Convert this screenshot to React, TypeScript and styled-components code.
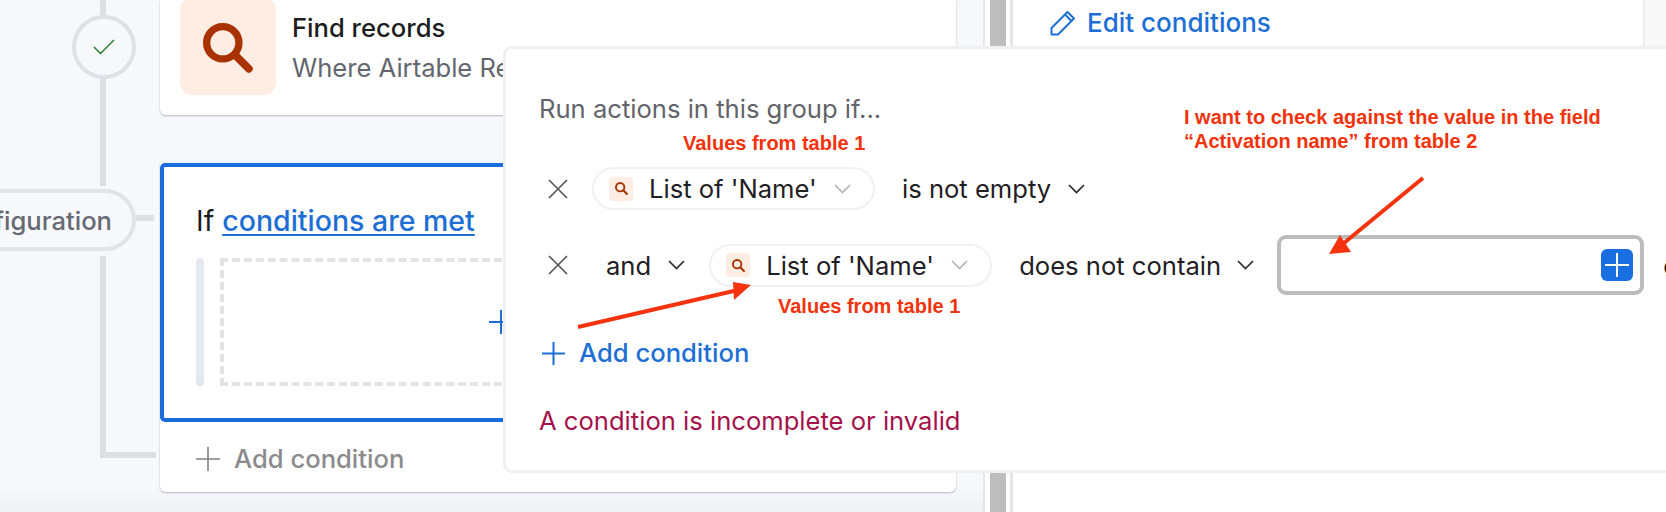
import React from "react";
import styled, { createGlobalStyle } from "styled-components";

const Global = createGlobalStyle`
  html, body { margin: 0; padding: 0; background: #fff; }
  body { font-family: Inter, "Liberation Sans", sans-serif; }
  #root { width: 1666px; height: 512px; overflow: hidden; }
`;

const Page = styled.div`
  position: relative;
  display: flex;
  width: 1666px;
  height: 512px;
  overflow: hidden;
`;

const Canvas = styled.div`
  position: relative;
  flex: 0 0 983px;
  box-sizing: border-box;
  padding-left: 160px;
  background: linear-gradient(#f6f8fc 0, #f6f8fc 490px, #f1f2f6 505px, #f1f2f6 512px);
  overflow: hidden;
`;

const Splitter = styled.div`
  flex: 0 0 30px;
  box-sizing: border-box;
  width: 30px;
  display: flex;
  background: #fff;
`;
const SplitEdge = styled.div<{ $w: number }>`
  flex: 0 0 ${(p) => p.$w}px;
  background: #e6e6e9;
`;
const SplitGap = styled.div<{ $w: number }>`
  flex: 0 0 ${(p) => p.$w}px;
  background: #fff;
`;
const SplitBar = styled.div`
  flex: 0 0 16px;
  background: #bdbdbd;
`;

const Side = styled.div`
  flex: 1;
  background: #fff;
`;
const SideHeader = styled.div`
  display: flex;
  height: 49px;
  box-sizing: border-box;
  border-bottom: 3px solid #f0f0f0;
`;
const SideHeaderMain = styled.div`
  flex: 0 0 632px;
  box-sizing: border-box;
  display: flex;
  align-items: center;
  gap: 11px;
  padding: 0 0 1px 37px;
  border-right: 2px solid #ececec;
  color: #1d6fd6;
  font-size: 26px;
  font-weight: 500;
`;
const SideHeaderRest = styled.div`
  flex: 1;
  background: #f8f8f8;
`;

const Card = styled.div`
  width: 796px;
  box-sizing: border-box;
  background: #fff;
  border-radius: 0 0 6px 6px;
  box-shadow: 0 1px 2px rgba(60, 60, 70, 0.35);
`;
const FindCard = styled(Card)`
  display: flex;
  gap: 17px;
  height: 115px;
  padding-left: 20px;
`;
const IconTile = styled.div`
  flex: 0 0 96px;
  height: 95px;
  display: flex;
  align-items: center;
  justify-content: center;
  background: #ffece3;
  border-radius: 8px 8px 12px 12px;
`;
const FindText = styled.div`
  display: flex;
  flex-direction: column;
  padding-top: 12px;
  min-width: 0;
`;
const FindTitle = styled.div`
  font-size: 25.6px;
  line-height: 32px;
  font-weight: 500;
  color: #1c1d20;
  margin-left: -1px;
`;
const FindSub = styled.div`
  margin-top: 8px;
  margin-left: -1px;
  font-size: 25.6px;
  line-height: 32px;
  color: #63666f;
  white-space: nowrap;
`;

const GroupCard = styled(Card)`
  margin-top: 48px;
  height: 329px;
`;
const GroupFrame = styled.div`
  box-sizing: border-box;
  height: 259px;
  border: 4px solid #1b6ddb;
  border-radius: 5px;
  padding: 38px 33px 0 32px;
  background: #fff;
`;
const GroupTitle = styled.div`
  font-size: 28.5px;
  line-height: 32px;
  color: #1c1d20;
`;
const GroupLink = styled.span`
  color: #1d6fd6;
  font-weight: 500;
  text-decoration: underline;
  text-decoration-thickness: 2px;
  text-underline-offset: 3px;
`;
const GroupBody = styled.div`
  display: flex;
  gap: 16px;
  margin-top: 21px;
`;
const GroupBar = styled.div`
  flex: 0 0 8px;
  height: 128px;
  border-radius: 4px;
  background: #e4e8f2;
`;
const DropZone = styled.div`
  flex: 1;
  height: 128px;
  box-sizing: border-box;
  border: 4px dashed #e4e4e4;
  display: flex;
  align-items: center;
  justify-content: center;
  padding-right: 138px;
`;
const AddRow = styled.div<{ $muted?: boolean; $left?: number }>`
  display: flex;
  align-items: center;
  gap: 14px;
  font-size: 25.6px;
  line-height: 30px;
  font-weight: 500;
  color: ${(p) => (p.$muted ? "#8b8b8d" : "#1d6fd6")};
  margin-left: ${(p) => p.$left ?? 0}px;
`;
const GroupFooter = styled.div`
  padding: 22px 0 0 36px;
`;

const RailLine = styled.div<{ $x: number; $y: number; $w: number; $h: number }>`
  position: absolute;
  left: ${(p) => p.$x}px;
  top: ${(p) => p.$y}px;
  width: ${(p) => p.$w}px;
  height: ${(p) => p.$h}px;
  background: #dedfe4;
`;
const StepCircle = styled.div`
  position: absolute;
  left: 72px;
  top: 15px;
  width: 64px;
  height: 64px;
  box-sizing: border-box;
  border: 4px solid #e0e1e6;
  border-radius: 50%;
  background: #f6f8fc;
  display: flex;
  align-items: center;
  justify-content: center;
`;
const StepPill = styled.div`
  position: absolute;
  left: -100px;
  top: 189px;
  width: 236px;
  height: 62px;
  box-sizing: border-box;
  border: 4px solid #e2e3e8;
  border-radius: 31px;
  background: #f6f8fc;
  display: flex;
  align-items: center;
  justify-content: flex-end;
  padding-right: 20px;
  font-size: 25.6px;
  font-weight: 500;
  color: #676a72;
  white-space: nowrap;
`;

const Popover = styled.div`
  position: absolute;
  left: 503px;
  top: 46px;
  width: 1240px;
  height: 427px;
  box-sizing: border-box;
  background: #fff;
  border: 3px solid #f0f0f0;
  border-radius: 9px;
  padding: 45px 0 0 33px;
`;
const PopHeading = styled.div`
  font-size: 25.6px;
  line-height: 30px;
  color: #62646a;
`;
const CondRow = styled.div<{ $h: number; $top: number }>`
  display: flex;
  align-items: center;
  height: ${(p) => p.$h}px;
  margin-top: ${(p) => p.$top}px;
  padding-left: 9px;
`;
const FieldPill = styled.div<{ $left: number }>`
  display: flex;
  align-items: center;
  box-sizing: border-box;
  flex: 0 0 283px;
  height: 43px;
  margin-left: ${(p) => p.$left}px;
  padding: 0 22px 0 15px;
  border: 2px solid #f1f1f3;
  border-radius: 22px;
  background: #fff;
`;
const FieldIcon = styled.div`
  flex: 0 0 24px;
  height: 24px;
  display: flex;
  align-items: center;
  justify-content: center;
  border-radius: 4px;
  background: #ffece3;
`;
const FieldName = styled.span`
  margin-left: 16px;
  flex: 1;
  font-size: 25.6px;
  color: #1f2024;
  white-space: nowrap;
`;
const Select = styled.div<{ $left: number; $gap: number }>`
  display: flex;
  align-items: center;
  gap: ${(p) => p.$gap}px;
  margin-left: ${(p) => p.$left}px;
  font-size: 25.6px;
  color: #1f2024;
  white-space: nowrap;
`;
const ValueInput = styled.div`
  flex: 0 0 367px;
  height: 60px;
  margin-left: 23px;
  box-sizing: border-box;
  border: 4px solid #bcbcbc;
  border-radius: 9px;
  display: flex;
  align-items: center;
  justify-content: flex-end;
  padding-right: 7px;
`;
const InsertButton = styled.div`
  width: 32px;
  height: 32px;
  border-radius: 6px;
  background: #1a6fe0;
  display: flex;
  align-items: center;
  justify-content: center;
`;
const TrailGlyph = styled.span`
  margin-left: 19px;
  font-size: 25.6px;
  font-weight: 500;
  color: #1f2024;
`;
const PopAdd = styled(AddRow)`
  margin-top: 43px;
`;
const PopError = styled.div`
  margin-top: 38px;
  font-size: 25.6px;
  line-height: 30px;
  color: #a5124a;
`;

const Note = styled.div<{ $x: number; $y: number }>`
  position: absolute;
  left: ${(p) => p.$x}px;
  top: ${(p) => p.$y}px;
  font-family: "Liberation Sans", Arial, sans-serif;
  font-weight: 700;
  font-size: 20px;
  line-height: 24px;
  color: #f2330d;
  white-space: nowrap;
`;
const ArrowLayer = styled.svg`
  position: absolute;
  inset: 0;
  pointer-events: none;
`;

const Plus = ({ size, color, w = 2 }: { size: number; color: string; w?: number }) => (
  <svg width={size} height={size} viewBox={`0 0 ${size} ${size}`} style={{ flex: "none" }}>
    <path d={`M${size / 2} 0V${size}M0 ${size / 2}H${size}`} stroke={color} strokeWidth={w} fill="none" />
  </svg>
);
const Chevron = ({ color = "#2a2b2f" }: { color?: string }) => (
  <svg width="17" height="10" viewBox="0 0 17 10" style={{ flex: "none" }}>
    <path d="M1 1l7.5 7.5L16 1" stroke={color} strokeWidth="1.7" fill="none" />
  </svg>
);
const Cross = () => (
  <svg width="20" height="20" viewBox="0 0 20 20" style={{ flex: "none" }}>
    <path d="M1 1l18 18M19 1L1 19" stroke="#55575c" strokeWidth="1.7" fill="none" />
  </svg>
);
const Magnifier = ({ size }: { size: number }) => (
  <svg width={size} height={size} viewBox="0 0 48 48">
    <circle cx="19" cy="19" r="15.5" stroke="#a83200" strokeWidth="7" fill="none" />
    <path d="M30.5 30.5L44 44" stroke="#a83200" strokeWidth="7.5" strokeLinecap="round" fill="none" />
  </svg>
);
const Pencil = () => (
  <svg width="26" height="26" viewBox="0 0 26 26" style={{ flex: "none" }}>
    <path
      d="M1.5 24.5v-6.5L17.5 2l6.5 6.5L8 24.5zM15 4.5l6.5 6.5"
      stroke="#1d6fd6"
      strokeWidth="2"
      strokeLinejoin="round"
      fill="none"
    />
  </svg>
);
const Field = ({ left }: { left: number }) => (
  <FieldPill $left={left}>
    <FieldIcon>
      <Magnifier size={13} />
    </FieldIcon>
    <FieldName>List of 'Name'</FieldName>
    <Chevron color="#b4b5b9" />
  </FieldPill>
);

export default function App() {
  return (
    <Page>
      <Global />
      <Canvas>
        <RailLine $x={100} $y={0} $w={6} $h={186} />
        <RailLine $x={100} $y={256} $w={6} $h={202} />
        <RailLine $x={100} $y={452} $w={56} $h={6} />
        <RailLine $x={136} $y={215} $w={18} $h={6} />
        <StepCircle>
          <svg width="22" height="16" viewBox="0 0 22 16">
            <path d="M1 8l6.5 6.5L21 1" stroke="#1b7a22" strokeWidth="1.4" fill="none" />
          </svg>
        </StepCircle>
        <StepPill>Configuration</StepPill>
        <FindCard>
          <IconTile>
            <Magnifier size={50} />
          </IconTile>
          <FindText>
            <FindTitle>Find records</FindTitle>
            <FindSub>Where Airtable Record</FindSub>
          </FindText>
        </FindCard>
        <GroupCard>
          <GroupFrame>
            <GroupTitle>
              If <GroupLink>conditions are met</GroupLink>
            </GroupTitle>
            <GroupBody>
              <GroupBar />
              <DropZone>
                <Plus size={24} color="#1d6fd6" />
              </DropZone>
            </GroupBody>
          </GroupFrame>
          <GroupFooter>
            <AddRow $muted>
              <Plus size={24} color="#808082" w={1.6} />
              Add condition
            </AddRow>
          </GroupFooter>
        </GroupCard>
      </Canvas>
      <Splitter>
        <SplitEdge $w={2} />
        <SplitGap $w={5} />
        <SplitBar />
        <SplitGap $w={4} />
        <SplitEdge $w={3} />
      </Splitter>
      <Side>
        <SideHeader>
          <SideHeaderMain>
            <Pencil />
            Edit conditions
          </SideHeaderMain>
          <SideHeaderRest />
        </SideHeader>
      </Side>
      <Popover>
        <PopHeading>Run actions in this group if...</PopHeading>
        <CondRow $h={43} $top={43}>
          <Cross />
          <Field left={24} />
          <Select $left={27} $gap={17}>
            is not empty
            <Chevron />
          </Select>
        </CondRow>
        <CondRow $h={60} $top={25}>
          <Cross />
          <Select $left={38} $gap={17}>
            and
            <Chevron />
          </Select>
          <Field left={24} />
          <Select $left={27} $gap={16}>
            does not contain
            <Chevron />
          </Select>
          <ValueInput>
            <InsertButton>
              <Plus size={24} color="#fff" />
            </InsertButton>
          </ValueInput>
          <TrailGlyph>c</TrailGlyph>
        </CondRow>
        <PopAdd $left={3}>
          <Plus size={23} color="#1d6fd6" />
          Add condition
        </PopAdd>
        <PopError>A condition is incomplete or invalid</PopError>
      </Popover>
      <Note $x={683} $y={131}>Values from table 1</Note>
      <Note $x={778} $y={294}>Values from table 1</Note>
      <Note $x={1184} $y={105}>
        I want to check against the value in the field
        <br />
        “Activation name” from table 2
      </Note>
      <ArrowLayer width="1666" height="512" viewBox="0 0 1666 512">
        <path d="M578 327L738 290" stroke="#f5330f" strokeWidth="4" fill="none" />
        <path d="M733 282L751 285L734 300Z" fill="#f5330f" />
        <path d="M1423 178L1344 243" stroke="#f5330f" strokeWidth="4" fill="none" />
        <path d="M1340 235L1329 254L1351 252Z" fill="#f5330f" />
      </ArrowLayer>
    </Page>
  );
}
